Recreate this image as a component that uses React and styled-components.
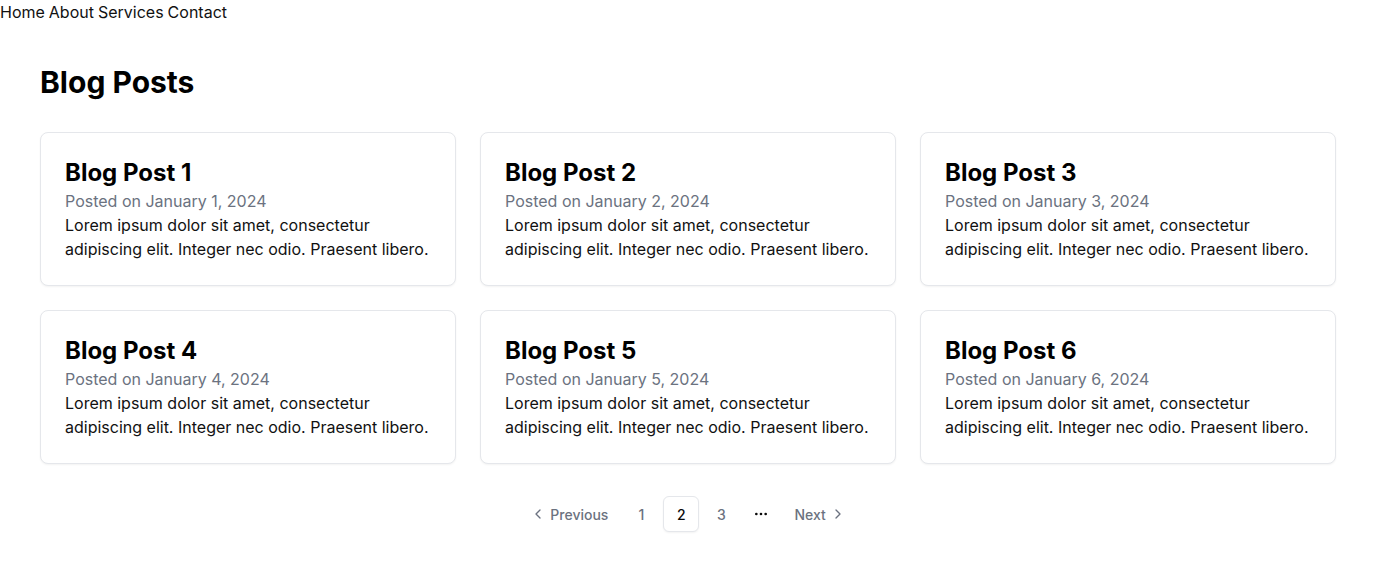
import React from "react";
import styled, { createGlobalStyle } from "styled-components";
import { ChevronLeft, ChevronRight, MoreHorizontal } from "lucide-react";

const Global = createGlobalStyle`
  * { box-sizing: border-box; }
  body { margin: 0; font-family: Inter, "Liberation Sans", sans-serif; color: #0a0a0a; background: #fff; }
`;

const Nav = styled.nav`
  display: flex;
  gap: 4px;
  font-size: 16px;
  line-height: 24px;
  color: #111;
`;

const NavLink = styled.a`
  color: inherit;
  text-decoration: none;
`;

const Main = styled.main`
  padding: 40px 40px;
`;

const Title = styled.h1`
  margin: 0 0 32px;
  font-size: 30px;
  line-height: 36px;
  font-weight: 700;
  color: #000;
`;

const Grid = styled.div`
  display: grid;
  grid-template-columns: repeat(3, 1fr);
  gap: 24px;
`;

const Card = styled.article`
  border: 1px solid #e5e7eb;
  border-radius: 8px;
  box-shadow: 0 1px 2px rgba(0, 0, 0, 0.05);
  padding: 24px;
  background: #fff;
`;

const CardTitle = styled.h2`
  margin: 0;
  font-size: 24px;
  line-height: 32px;
  font-weight: 700;
  color: #000;
`;

const Meta = styled.p`
  margin: 0;
  font-size: 16px;
  line-height: 24px;
  color: #6b7280;
`;

const Body = styled.p`
  margin: 0;
  font-size: 16px;
  line-height: 24px;
  color: #111;
`;

const Pager = styled.nav`
  display: flex;
  justify-content: center;
  align-items: center;
  gap: 4px;
  margin-top: 32px;
`;

const PageButton = styled.a`
  display: inline-flex;
  align-items: center;
  justify-content: center;
  gap: 4px;
  height: 36px;
  min-width: 36px;
  padding: ${(p) => (p.$wide ? "0 10px" : "0")};
  border: 1px solid ${(p) => (p.$active ? "#e5e7eb" : "transparent")};
  border-radius: 6px;
  font-size: 14px;
  font-weight: 500;
  color: ${(p) => (p.$active ? "#0a0a0a" : "#6b7280")};
  text-decoration: none;
  background: #fff;
  box-shadow: ${(p) => (p.$active ? "0 1px 2px rgba(0,0,0,0.05)" : "none")};
`;

const Ellipsis = styled.span`
  display: inline-flex;
  align-items: center;
  justify-content: center;
  width: 36px;
  height: 36px;
  color: #0a0a0a;
`;

const posts = [1, 2, 3, 4, 5, 6];

export default function App() {
  return (
    <>
      <Global />
      <Nav>
        <NavLink href="#">Home</NavLink>
        <NavLink href="#">About</NavLink>
        <NavLink href="#">Services</NavLink>
        <NavLink href="#">Contact</NavLink>
      </Nav>
      <Main>
        <Title>Blog Posts</Title>
        <Grid>
          {posts.map((n) => (
            <Card key={n}>
              <CardTitle>Blog Post {n}</CardTitle>
              <Meta>Posted on January {n}, 2024</Meta>
              <Body>
                Lorem ipsum dolor sit amet, consectetur adipiscing elit. Integer nec odio. Praesent libero.
              </Body>
            </Card>
          ))}
        </Grid>
        <Pager>
          <PageButton href="#" $wide>
            <ChevronLeft size={16} strokeWidth={2} />
            Previous
          </PageButton>
          <PageButton href="#">1</PageButton>
          <PageButton href="#" $active>2</PageButton>
          <PageButton href="#">3</PageButton>
          <Ellipsis>
            <MoreHorizontal size={16} strokeWidth={2} />
          </Ellipsis>
          <PageButton href="#" $wide>
            Next
            <ChevronRight size={16} strokeWidth={2} />
          </PageButton>
        </Pager>
      </Main>
    </>
  );
}
